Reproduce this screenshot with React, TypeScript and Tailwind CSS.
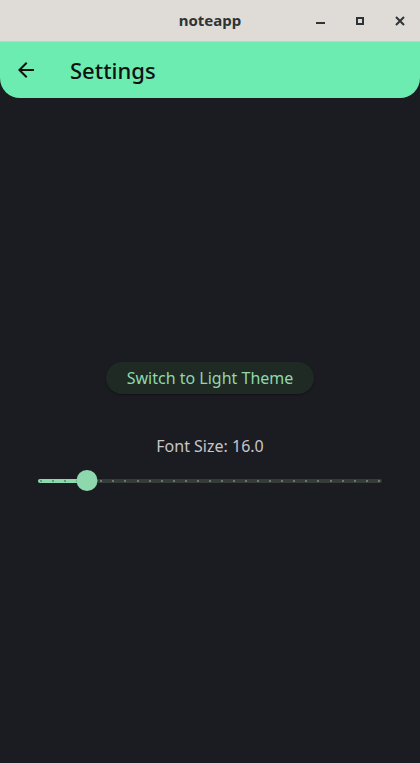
import React from 'react';

const TICKS = 29;
const VALUE = 16;
const MIN = 12;
const MAX = 40;

export default function App() {
  const pct = ((VALUE - MIN) / (MAX - MIN)) * 100;

  return (
    <div className="w-[420px] h-[763px] flex flex-col bg-[#1b1c21] overflow-hidden" style={{ fontFamily: '"Noto Sans", sans-serif' }}>
      {/* window title bar */}
      <div className="h-[42px] shrink-0 relative flex items-center justify-center bg-[#dfdcd8] border-b border-[#cfccc8]">
        <span className="text-[15px] font-bold text-[#2e3436]">noteapp</span>
        <div className="absolute right-0 top-0 h-full flex items-center">
          <div className="w-[40px] flex justify-center">
            <div className="w-[9px] h-[2px] bg-[#2e3436] mt-[5px]" />
          </div>
          <div className="w-[40px] flex justify-center">
            <div className="w-[8px] h-[8px] border-2 border-[#2e3436]" />
          </div>
          <div className="w-[40px] flex justify-center">
            <svg width="10" height="10" viewBox="0 0 10 10">
              <path d="M1 1L9 9M9 1L1 9" stroke="#2e3436" strokeWidth="2" />
            </svg>
          </div>
        </div>
      </div>

      {/* app bar */}
      <div className="h-[56px] shrink-0 flex items-center bg-[#6cecb0] rounded-b-[20px]">
        <div className="w-[52px] flex justify-center">
          <svg width="24" height="24" viewBox="0 0 24 24">
            <path d="M20 11H7.83l5.59-5.59L12 4l-8 8 8 8 1.41-1.41L7.83 13H20v-2z" fill="#111" />
          </svg>
        </div>
        <span className="ml-[18px] text-[22px] font-medium text-[#111]">Settings</span>
      </div>

      {/* content */}
      <div className="flex-1 flex flex-col items-center justify-center pb-[8px]">
        <button className="h-[32px] px-[21px] rounded-full bg-[#1f2a25] text-[#8ed8ad] text-[16px] shadow-[0_1px_2px_rgba(0,0,0,0.4)]">
          Switch to Light Theme
        </button>
        <div className="mt-[40px] text-[16px] text-[#c6c6cb]">Font Size: 16.0</div>
        <div className="mt-[12px] w-[420px] px-[38px]">
          <div className="relative h-[22px] flex items-center">
            <div className="absolute left-0 right-0 h-[4px] rounded-full bg-[#363d38]" />
            <div className="absolute left-0 h-[4px] rounded-full bg-[#8ed8ad]" style={{ width: `${pct}%` }} />
            <div className="absolute left-[2px] right-[2px] flex justify-between items-center">
              {Array.from({ length: TICKS }).map((_, i) => (
                <div
                  key={i}
                  className={i <= 4 ? 'w-[2px] h-[2px] bg-[#5e9c7a]' : 'w-[2px] h-[2px] bg-[#6b776f]'}
                />
              ))}
            </div>
            <div
              className="absolute w-[21px] h-[21px] rounded-full bg-[#8ed8ad] -translate-x-1/2"
              style={{ left: `${pct}%` }}
            />
          </div>
        </div>
      </div>
    </div>
  );
}
